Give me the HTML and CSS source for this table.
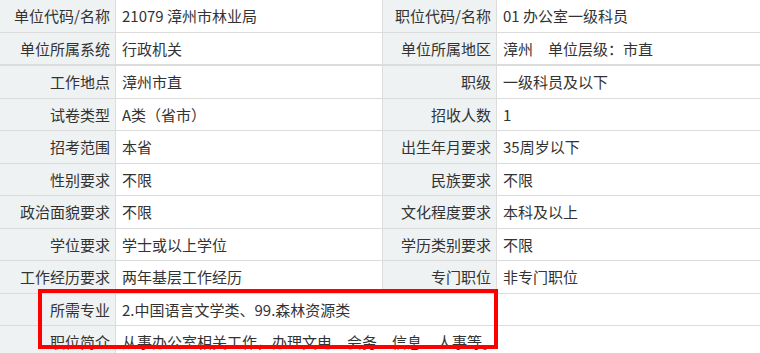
FILE: index.html
```html
<!DOCTYPE html>
<html lang="zh-CN">
<head>
<meta charset="utf-8">
<title>职位信息</title>
<link rel="stylesheet" href="styles.css">
</head>
<body>
<div class="page">
  <table class="info info-top">
    <tr>
      <td class="lbl c1">单位代码/名称</td>
      <td class="val c2">21079 漳州市林业局</td>
      <td class="lbl c3">职位代码/名称</td>
      <td class="val c4">01 办公室一级科员</td>
    </tr>
    <tr>
      <td class="lbl">单位所属系统</td>
      <td class="val">行政机关</td>
      <td class="lbl">单位所属地区</td>
      <td class="val">漳州&emsp;单位层级：市直</td>
    </tr>
  </table>
  <table class="info info-main">
    <tr>
      <td class="lbl c1">工作地点</td>
      <td class="val c2">漳州市直</td>
      <td class="lbl c3">职级</td>
      <td class="val c4">一级科员及以下</td>
    </tr>
    <tr>
      <td class="lbl">试卷类型</td>
      <td class="val">A类（省市）</td>
      <td class="lbl">招收人数</td>
      <td class="val">1</td>
    </tr>
    <tr>
      <td class="lbl">招考范围</td>
      <td class="val">本省</td>
      <td class="lbl">出生年月要求</td>
      <td class="val">35周岁以下</td>
    </tr>
    <tr>
      <td class="lbl">性别要求</td>
      <td class="val">不限</td>
      <td class="lbl">民族要求</td>
      <td class="val">不限</td>
    </tr>
    <tr>
      <td class="lbl">政治面貌要求</td>
      <td class="val">不限</td>
      <td class="lbl">文化程度要求</td>
      <td class="val">本科及以上</td>
    </tr>
    <tr>
      <td class="lbl">学位要求</td>
      <td class="val">学士或以上学位</td>
      <td class="lbl">学历类别要求</td>
      <td class="val">不限</td>
    </tr>
    <tr>
      <td class="lbl">工作经历要求</td>
      <td class="val">两年基层工作经历</td>
      <td class="lbl">专门职位</td>
      <td class="val">非专门职位</td>
    </tr>
    <tr>
      <td class="lbl">所需专业</td>
      <td class="val" colspan="3">2.中国语言文学类、99.森林资源类</td>
    </tr>
    <tr>
      <td class="lbl">职位简介</td>
      <td class="val" colspan="3">从事办公室相关工作，办理文电、会务、信息、人事等。</td>
    </tr>
  </table>
  <div class="highlight"></div>
</div>
</body>
</html>
```
FILE: styles.css
```css
html, body {
  margin: 0;
  padding: 0;
  background: #fff;
}
.page {
  position: relative;
  width: 760px;
  height: 353px;
  overflow: hidden;
  font-family: "Noto Sans CJK SC", "Noto Sans", sans-serif;
  font-size: 15px;
  color: #333;
}
.info {
  width: 760px;
  table-layout: fixed;
  border-collapse: separate;
  border-spacing: 0;
}
.info-main {
  border-top: 1px solid #dcdcdc;
}
.info td {
  box-sizing: border-box;
  padding: 6px 5px 6px 6px;
  line-height: 19.5px;
  border-bottom: 1px solid #dcdcdc;
  border-right: 1px solid #dcdcdc;
  white-space: nowrap;
  vertical-align: middle;
}
.info td:last-child {
  border-right: none;
}
.c1 { width: 116px; }
.c2 { width: 267px; }
.c3 { width: 114px; }
.c4 { width: 263px; }
.lbl {
  background: #eef2f2;
  text-align: right;
}
.val {
  background: #fff;
  text-align: left;
}
.highlight {
  position: absolute;
  left: 38px;
  top: 289px;
  width: 460px;
  height: 60px;
  box-sizing: border-box;
  border: 4px solid #ff0000;
}
```
